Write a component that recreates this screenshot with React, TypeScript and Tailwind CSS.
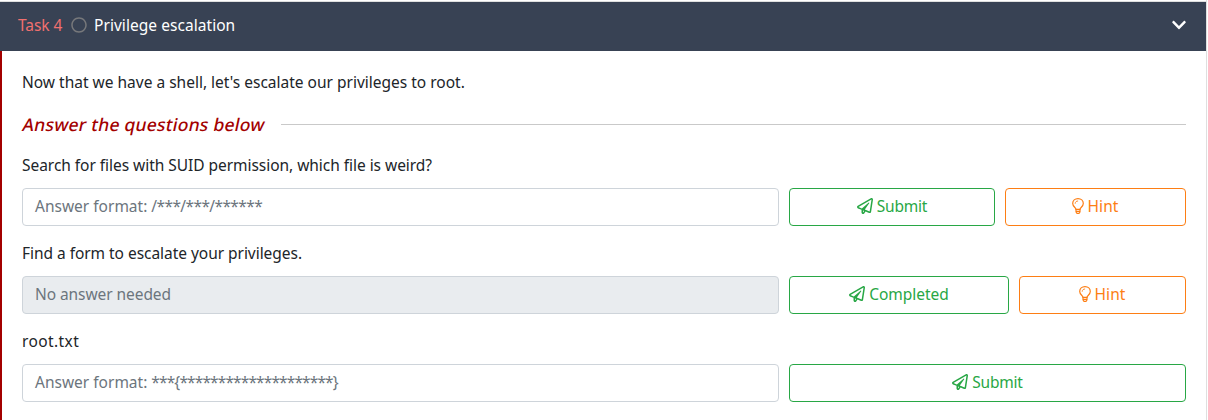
import React from "react";
import { FaChevronDown, FaRegCircle, FaRegPaperPlane } from "react-icons/fa";

const Bulb = () => (
  <svg viewBox="0 0 12 16" className="h-4 w-3" fill="none" stroke="currentColor" strokeWidth="1.2" strokeLinecap="round" strokeLinejoin="round">
    <path d="M4 11.4C4 9.6 .7 8.500 .7 5.500C.7 2.600 3 .600 6 .600S11.300 2.600 11.300 5.500C11.300 8.500 8 9.600 8 11.400Z" />
    <path d="M3.200 5.300C3.200 4 4.300 3 5.700 3" strokeWidth="0.900" />
    <path d="M4 11.400V14L5 15.300H7L8 14V11.400M4 13.400H8" />
  </svg>
);

const SubmitButton = ({ label, className, text }: { label: string; className: string; text: string }) => (
  <button className={`flex h-[38px] items-center justify-center gap-1 rounded border border-[#28a745] pb-[2px] text-[#28a745] ${className}`}>
    <FaRegPaperPlane className="size-4" />
    <span className={text}>{label}</span>
  </button>
);

const HintButton = ({ className }: { className: string }) => (
  <button className={`flex h-[38px] items-center justify-center gap-[3px] rounded border border-[#fd7e14] pb-[2px] text-[#fd7e14] ${className}`}>
    <Bulb />
    <span className="tracking-[0.1px]">Hint</span>
  </button>
);

const Field = ({ children, className = "" }: { children: React.ReactNode; className?: string }) => (
  <div className={`flex h-[38px] w-[757px] items-center rounded border border-[#ced4da] px-3 pb-[2px] text-[#6c757d] ${className}`}>
    {children}
  </div>
);

export default function App() {
  return (
    <div className="h-[420px] w-[1208px] overflow-hidden bg-white font-['Noto_Sans',sans-serif] text-[15.5px] leading-6 text-[#212529]">
      <div className="h-full w-[1207px] border-r border-[#dfdfdf] pt-px">
        <header className="flex h-[50px] items-center border-t border-[#dfdfdf] bg-[#384254] pr-5 pb-[3px] pl-[18px] text-white">
          <span className="w-[53px] whitespace-nowrap tracking-[-0.08px] text-[#f0706f]">Task 4</span>
          <FaRegCircle className="size-4 text-[#77787b]" />
          <span className="ml-[7px] tracking-[0.05px]">Privilege escalation</span>
          <FaChevronDown className="ml-auto h-4 w-[14px]" />
        </header>
        <main className="h-[369px] border-l-2 border-[#a30000] pt-[19px] pr-5 pl-5">
          <p>Now that we have a shell, let's escalate our privileges to root.</p>
          <div className="mt-[18px] flex h-6 items-center">
            <h2 className="w-[259px] -skew-x-12 whitespace-nowrap pl-px text-[17.5px] font-medium tracking-[0.24px] text-[#a30000]">Answer the questions below</h2>
            <div className="h-px flex-1 bg-[#c9c9c9]" />
          </div>
          <p className="mt-[17px] tracking-[-0.04px]">Search for files with SUID permission, which file is weird?</p>
          <div className="mt-[11px] flex gap-[10px]">
            <Field>
              <span className="whitespace-pre">Answer format: </span>
              <span className="tracking-[-0.6px]">/***/***/******</span>
            </Field>
            <SubmitButton label="Submit" className="w-[206px]" text="tracking-[-0.2px]" />
            <HintButton className="w-[181px]" />
          </div>
          <p className="mt-[15px] tracking-[-0.04px]">Find a form to escalate your privileges.</p>
          <div className="mt-[11px] flex gap-[10px]">
            <Field className="bg-[#e9ecef] tracking-[-0.07px]">No answer needed</Field>
            <SubmitButton label="Completed" className="w-[220px]" text="tracking-[-0.03px]" />
            <HintButton className="w-[167px]" />
          </div>
          <p className="mt-[15px] tracking-[0.4px]">root.txt</p>
          <div className="mt-[11px] flex gap-[10px]">
            <Field>
              <span className="whitespace-pre">Answer format: </span>
              <span className="tracking-[-0.87px]">{"***{********************}"}</span>
            </Field>
            <SubmitButton label="Submit" className="w-[397px]" text="tracking-[-0.2px]" />
          </div>
        </main>
      </div>
    </div>
  );
}
